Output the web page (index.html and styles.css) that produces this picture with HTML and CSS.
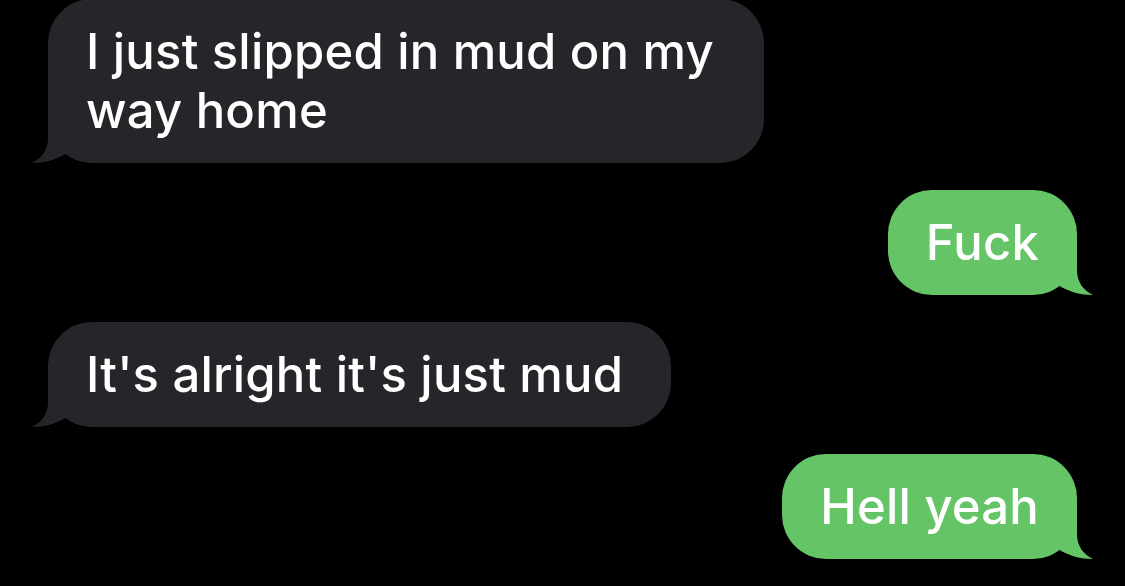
FILE: index.html
```html
<!DOCTYPE html>
<html lang="en">
<head>
    <meta charset="UTF-8">
    <meta name="viewport" content="width=device-width, initial-scale=1.0">
    <title>Messages</title>
    <link rel="stylesheet" href="styles.css">
</head>
<body>

    <div class="thread">
        <div class="bubble incoming">
            I just slipped in mud on my way home
            <svg class="tail" viewBox="0 0 40 45" width="40" height="45"><path d="M16 0 L16 20 C16 32 10 40 0 45 C12 45 24 42 35 35 L35 0 Z"/></svg>
        </div>

        <div class="bubble outgoing">
            Fuck
            <svg class="tail" viewBox="0 0 40 45" width="40" height="45"><path d="M16 0 L16 20 C16 32 10 40 0 45 C12 45 24 42 35 35 L35 0 Z"/></svg>
        </div>

        <div class="bubble incoming">
            It's alright it's just mud
            <svg class="tail" viewBox="0 0 40 45" width="40" height="45"><path d="M16 0 L16 20 C16 32 10 40 0 45 C12 45 24 42 35 35 L35 0 Z"/></svg>
        </div>

        <div class="bubble outgoing">
            Hell yeah
            <svg class="tail" viewBox="0 0 40 45" width="40" height="45"><path d="M16 0 L16 20 C16 32 10 40 0 45 C12 45 24 42 35 35 L35 0 Z"/></svg>
        </div>
    </div>

</body>
</html>
```

FILE: styles.css
```css
body {
    margin: 0;
    background: #000;
    font-family: Inter, "Noto Sans", sans-serif;
    overflow: hidden;
}

.thread {
    display: flex;
    flex-direction: column;
    gap: 27px;
    padding: 0 48px;
    margin-top: -1px;
}

.bubble {
    position: relative;
    padding: 23px 38px;
    border-radius: 44px;
    font-size: 49px;
    line-height: 59px;
    font-weight: 500;
    letter-spacing: 0.2px;
    color: #fff;
}

.incoming {
    align-self: flex-start;
    max-width: 630px;
    padding-right: 48px;
    background: #26252a;
}

.outgoing {
    align-self: flex-end;
    background: #65c466;
}

/* tails */
.tail {
    position: absolute;
    bottom: 0;
    left: -16px;
}

.incoming .tail {
    fill: #26252a;
}

.outgoing .tail {
    left: auto;
    right: -16px;
    transform: scaleX(-1);
    fill: #65c466;
}
```
